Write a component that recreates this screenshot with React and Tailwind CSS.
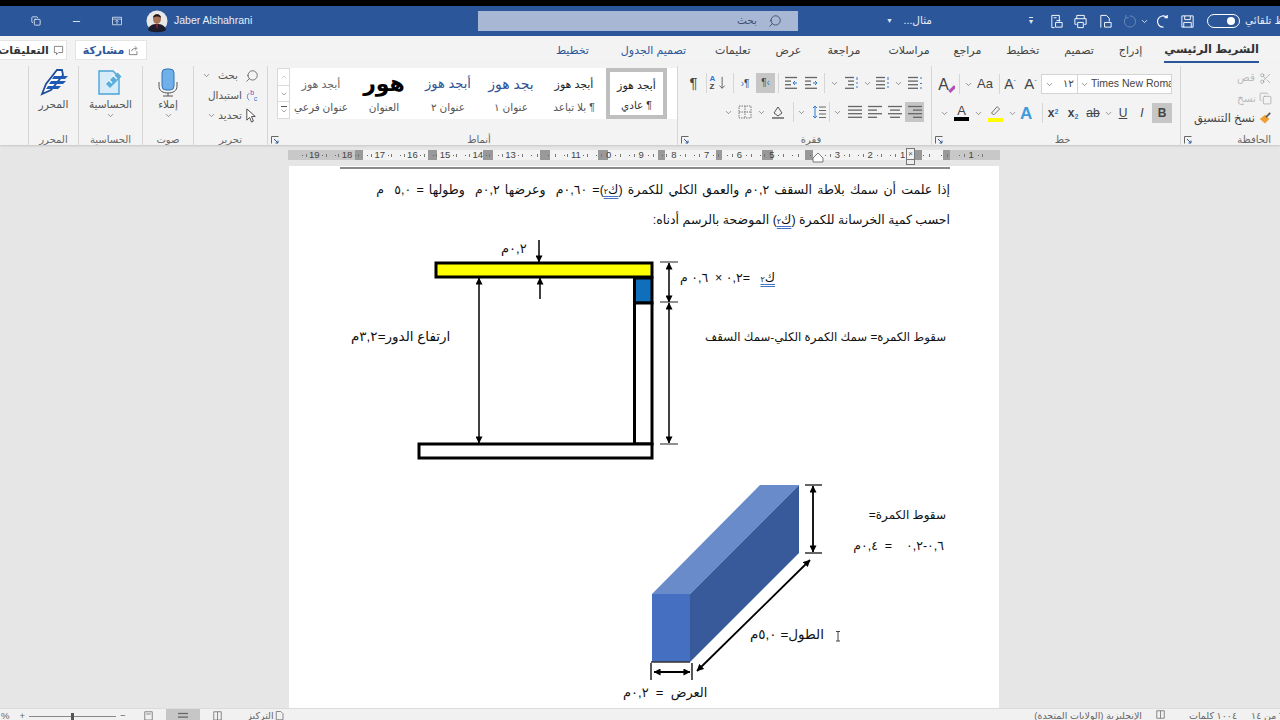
import { Search, Minus, ChevronDown, Copy, Scissors } from "lucide-react";

const Chev = ({ c = "" }) => <ChevronDown size={9} strokeWidth={1.6} className={`text-[#555] shrink-0 ${c}`} />;

const Sep = () => <div className="w-px h-5 bg-[#d6d6d6] shrink-0" />;

// small 16x16 drawn icon, children are the strokes
const Ic = ({ children, s = 16, c = "" }) => (
    <svg width={s} height={s} viewBox="0 0 16 16" fill="none" className={`shrink-0 ${c}`}>{children}</svg>
);

const Launcher = () => (
    <svg width="8" height="8" viewBox="0 0 8 8" fill="none" className="absolute left-[3px] bottom-[3px]">
        <path d="M0.5 7.5V0.5H7.5" stroke="#666" />
        <path d="M3 3L7 7M4.5 7H7V4.5" stroke="#2b579a" />
    </svg>
);

const Group = ({ w, label, launcher, right, children }) => (
    <div className={`relative h-full flex flex-col border-l border-[#d6d6d6] my-[2px] ${w}`}>
        <div className="flex-1 min-h-0">{children}</div>
        <div className={`h-[13px] mb-[1px] text-[10px] leading-[13px] text-[#666] ${right ? "text-right pr-[9px]" : "text-center"} ${launcher && !right ? "pl-[13px]" : ""}`}>{label}</div>
        {launcher && <Launcher />}
    </div>
);

const Lines = ({ rows, color = "#666", children }) => (
    <Ic>
        {rows.map((r, i) => <path key={i} d={`M${r[0]} ${2.5 + i * 3.6}H${r[1]}`} stroke={color} strokeWidth="1.3" />)}
        {children}
    </Ic>
);

const StyleCell = ({ w, preview, label, cls }) => (
    <div className={`h-full flex flex-col items-center shrink-0 ${w}`}>
        <div className={`h-[32px] flex items-center justify-center ${cls}`} dir="rtl">{preview}</div>
        <div className="text-[10.5px] leading-[14px] text-[#555]" dir="rtl">{label}</div>
    </div>
);

const Avatar = () => (
    <svg width="22" height="24" viewBox="0 0 22 24">
        <circle cx="11" cy="12" r="10.5" fill="#e8e8e8" />
        <path d="M2 21C3 16 7 15 11 15C15 15 19 16 20 21C17 24 5 24 2 21Z" fill="#1c1c2b" />
        <path d="M9.5 15L11 21L12.5 15Z" fill="#7a2230" />
        <ellipse cx="11" cy="10" rx="4" ry="5" fill="#a77357" />
        <path d="M7 9C7 4 15 4 15 9C13 7 9 7 7 9Z" fill="#20191a" />
    </svg>
);

const ruler = [19, 18, 17, 16, 15, 14, 13, "", 11, 0, 9, 8, 7, 6, 5, "", 3, 2, 1, "", 1];

const Ruler = () => (
    <div className="relative ml-[288px] mt-[5px] w-[712px] h-[10px] flex bg-[#c8c8c8]">
        <div className="w-[67px] shrink-0" />
        <div className="w-[8px] shrink-0 bg-[#999]" />
        <div className="w-[65px] shrink-0 bg-[#f3f3f3]" />
        <div className="w-[9px] shrink-0 bg-[#999]" />
        <div className="w-[46px] shrink-0 bg-[#f3f3f3]" />
        <div className="w-[10px] shrink-0 bg-[#999]" />
        <div className="w-[47px] shrink-0 bg-[#f3f3f3]" />
        <div className="w-[10px] shrink-0 bg-[#999]" />
        <div className="w-[48px] shrink-0 bg-[#f3f3f3]" />
        <div className="w-[10px] shrink-0 bg-[#999]" />
        <div className="w-[50px] shrink-0 bg-[#f3f3f3]" />
        <div className="w-[7px] shrink-0 bg-[#999]" />
        <div className="w-[51px] shrink-0 bg-[#f3f3f3]" />
        <div className="w-[6px] shrink-0 bg-[#999]" />
        <div className="w-[40px] shrink-0 bg-[#f3f3f3]" />
        <div className="w-[11px] shrink-0 bg-[#999]" />
        <div className="w-[32px] shrink-0 bg-[#f3f3f3]" />
        <div className="w-[8px] shrink-0 bg-[#999]" />
        <div className="w-[102px] shrink-0 bg-[#f3f3f3]" />
        <div className="w-[7px] shrink-0 bg-[#999]" />
        <div className="w-[21px] shrink-0 bg-[#f3f3f3]" />
        <div className="w-[7px] shrink-0 bg-[#999]" />
        <div className="absolute inset-0 pl-[10px] flex text-[9.5px] leading-[10px] text-[#444]">
            {ruler.map((n, i) => (
                <div key={i} className={`w-[32.7px] shrink-0 flex items-center justify-between px-[4px] ${i === 20 ? "ml-[3px]" : ""}`}>
                    <span className="w-px h-px bg-[#666]" />
                    <span className="w-px h-[3px] bg-[#777]" />
                    <span>{n}</span>
                    <span className="w-px h-px bg-[#666]" />
                    <span className="w-px h-[3px] bg-[#777]" />
                </div>
            ))}
        </div>
        <svg width="12" height="12" viewBox="0 0 12 12" className="absolute left-[524px] top-[2px]">
            <path d="M6 1L11 6V10H1V6Z" fill="#fff" stroke="#777" />
        </svg>
        <div className="absolute left-[618px] -top-[2px] w-[9px] h-[17px] border border-[#777] bg-[#f3f3f3]/60 flex flex-col">
            <span className="flex-1 text-center text-[8px] leading-[10px] text-[#555]">×</span>
            <span className="h-[5px] border-t border-[#777]" />
        </div>
    </div>
);

const Ku2 = () => <span className="underline decoration-double decoration-[#4472c4] underline-offset-2">ك<span className="text-[8px]">٢</span></span>;

const Lbl = ({ c, children }) => <span dir="rtl" className={`absolute whitespace-nowrap leading-[16px] text-[#111] ${c}`}>{children}</span>;

const Drawings = () => (
    <div className="relative w-[710px] h-[468px] shrink-0">
        <svg width="710" height="468" viewBox="289 240 710 468" className="absolute inset-0">
            <defs>
                <marker id="a" viewBox="0 0 8 8" refX="7.5" refY="4" markerWidth="7" markerHeight="7" orient="auto-start-reverse" markerUnits="userSpaceOnUse">
                    <path d="M0 0L8 4L0 8Z" fill="#000" />
                </marker>
            </defs>
            <rect x="436" y="264" width="216" height="14" fill="#ffff00" stroke="#000" strokeWidth="3" />
            <rect x="634.5" y="279" width="17.5" height="25" fill="#0f6fbd" stroke="#000" strokeWidth="3" />
            <rect x="634.5" y="304" width="17.5" height="141" fill="#fff" stroke="#000" strokeWidth="3" />
            <rect x="419" y="445" width="233" height="14" fill="#fff" stroke="#000" strokeWidth="3" />
            <g stroke="#000" strokeWidth="1.5" fill="none">
                <path d="M539 241V263" markerEnd="url(#a)" />
                <path d="M540 300V279" markerEnd="url(#a)" />
                <path d="M479 279V444" markerStart="url(#a)" markerEnd="url(#a)" />
                <path d="M669 264V303" markerStart="url(#a)" markerEnd="url(#a)" />
                <path d="M669 304V444" markerStart="url(#a)" markerEnd="url(#a)" />
            </g>
            <path d="M660 263H678M660 303H678M660 445H678" stroke="#222" strokeWidth="1.2" />

            <path d="M652 595L760 486H799L690 595Z" fill="#6a8bca" />
            <path d="M690 595L799 486V554L690 663Z" fill="#38599a" />
            <rect x="652" y="595" width="38" height="68" fill="#4570c2" />
            <path d="M805 486H822M805 554H822M651 663H690" stroke="#333" strokeWidth="1.3" />
            <path d="M651 664V681M692 664V681" stroke="#222" strokeWidth="1.5" />
            <g stroke="#000" strokeWidth="1.8" fill="none">
                <path d="M813 487V553" markerStart="url(#a)" markerEnd="url(#a)" />
                <path d="M697 672L810 561" markerStart="url(#a)" markerEnd="url(#a)" />
                <path d="M654 673H690" markerStart="url(#a)" markerEnd="url(#a)" />
            </g>
            <path d="M836 632.5H840M838 632.5V642M836 642H840" stroke="#444" strokeWidth="1" />
        </svg>
        <Lbl c="left-[212px] top-[2px] text-[13px]">٠,٢م</Lbl>
        <Lbl c="left-[391px] top-[31px] text-[12.5px]"><Ku2 />&nbsp;&nbsp; =٠,٢&nbsp;×&nbsp; ٠,٦&nbsp;م</Lbl>
        <Lbl c="right-[53px] top-[90px] text-[11.75px]">سقوط الكمرة= سمك الكمرة الكلي-سمك السقف</Lbl>
        <Lbl c="left-[62px] top-[90px] text-[13.5px]">ارتفاع الدور=٣,٢م</Lbl>
        <Lbl c="right-[53px] top-[268px] text-[12px]">سقوط الكمرة=</Lbl>
        <Lbl c="right-[55px] top-[299px] text-[12.5px]">٠,٦-٠,٢&nbsp;&nbsp;&nbsp; =&nbsp; ٠,٤م</Lbl>
        <Lbl c="left-[461px] top-[388px] text-[13.5px]">الطول= ٥,٠م</Lbl>
        <Lbl c="left-[334px] top-[446px] text-[13px]">العرض&nbsp; =&nbsp; ٠,٢م</Lbl>
    </div>
);

export default function App() {
    return (
        <div className="w-[1280px] h-[720px] overflow-hidden flex flex-col bg-[#e6e6e6] [font-family:'Liberation_Sans','DejaVu_Sans',sans-serif]">
            <div className="h-[6px] bg-black shrink-0" />

            <div className="h-[30px] shrink-0 bg-[#2b579a] flex items-center text-white overflow-hidden">
                <Copy size={10} className="ml-[31px] shrink-0 text-[#e8eef7]" />
                <Minus size={11} className="ml-[30px] shrink-0 text-[#e8eef7]" />
                <Ic s={12} c="ml-[29px]"><path d="M2 3H14V13H2ZM2 5.5H14M8 12V7M6 9L8 7L10 9" stroke="#e8eef7" /></Ic>
                <div className="ml-[23px] shrink-0"><Avatar /></div>
                <span className="ml-[6px] text-[10.5px] text-[#e8eef7] w-[74px] shrink-0 whitespace-nowrap">Jaber Alshahrani</span>
                <div className="ml-[230px] w-[320px] shrink-0 h-[20px] bg-[#a8b8d4] flex items-center justify-end pr-[16px] gap-[11px] text-[10.5px] text-[#3d4f70]">
                    <span>بحث</span>
                    <Search size={14} strokeWidth={1.3} className="text-[#2b3a55] -scale-x-100" />
                </div>
                <span className="ml-[88px] shrink-0 text-[#dfe6f2] text-[7px]">▼</span>
                <span className="ml-[11px] w-[28px] shrink-0 text-[10.5px] text-[#e8eef7] whitespace-nowrap" dir="rtl">مثال...</span>
                <span className="ml-[97px] shrink-0 text-[#dfe6f2] text-[8px] leading-[8px] border-t border-[#dfe6f2]">▾</span>
                <Ic s={15} c="ml-[16px]"><path d="M3 1.5H11V8M3 1.5V14.5H6M7 9H14V14H7Z" stroke="#fff" /><path d="M8 7H12M5 4H8" stroke="#fff" /></Ic>
                <Ic s={15} c="ml-[9px]"><path d="M4 5V1.5H12V5M2 5H14V11H12M2 5V11H4M5 9H11V14.5H5Z" stroke="#fff" /></Ic>
                <Ic s={15} c="ml-[10px]"><path d="M3 14.5V1.5H9L12 4.5V8M7 9H14V14H7Z" stroke="#fff" /></Ic>
                <Ic s={15} c="ml-[9px] opacity-30"><path d="M4 4A6 6 0 1 0 8 2M4 1V4H7" stroke="#fff" /></Ic>
                <ChevronDown size={9} className="ml-[3px] shrink-0 text-white" />
                <Ic s={15} c="ml-[7px]"><path d="M12 4A6 6 0 1 0 8 14M12 1V4H9" stroke="#fff" strokeWidth="1.2" /></Ic>
                <Ic s={15} c="ml-[9px]"><path d="M2 2H14V14H2ZM5 2V6H11V2M4 14V9H12V14" stroke="#fff" /></Ic>
                <div className="ml-[12px] w-[33px] h-[14px] rounded-full border border-white flex items-center justify-end pr-[4px] shrink-0">
                    <span className="w-[8px] h-[8px] rounded-full bg-white" />
                </div>
                <span className="ml-[5px] shrink-0 text-[10.5px] text-[#e8eef7] whitespace-nowrap" dir="rtl">حفظ تلقائي</span>
            </div>

            <div className="h-[28px] shrink-0 bg-[#f3f3f3] flex items-center text-[11px] text-[#444] relative">
                <div className="-ml-[5px] w-[72px] h-[20px] bg-white border border-[#e4e4e4] flex items-center justify-center gap-1 font-bold text-[#333] whitespace-nowrap">
                    <span dir="rtl">التعليقات</span>
                    <Ic s={11}><path d="M2 2H14V11H8L5 14V11H2Z" stroke="#555" /></Ic>
                </div>
                <div className="ml-[8px] w-[72px] h-[20px] bg-white border border-[#e4e4e4] flex items-center justify-center gap-1 font-bold text-[#2b579a]">
                    <span dir="rtl">مشاركة</span>
                    <Ic s={11}><path d="M2 6V14H13V9M5 9C6 6 8 5 12 5M10 2L13 5L10 8" stroke="#555" /></Ic>
                </div>
                <div className="flex-1 flex justify-end items-center pr-[21px] h-full">
                    <span className="text-[#2b579a]" dir="rtl">تخطيط</span>
                    <span className="ml-[32px] text-[#2b579a]" dir="rtl">تصميم الجدول</span>
                    <span className="ml-[29px]" dir="rtl">تعليمات</span>
                    <span className="ml-[25px]" dir="rtl">عرض</span>
                    <span className="ml-[26px]" dir="rtl">مراجعة</span>
                    <span className="ml-[28px]" dir="rtl">مراسلات</span>
                    <span className="ml-[24px]" dir="rtl">مراجع</span>
                    <span className="ml-[25px]" dir="rtl">تخطيط</span>
                    <span className="ml-[25px]" dir="rtl">تصميم</span>
                    <span className="ml-[25px]" dir="rtl">إدراج</span>
                    <div className="ml-[22px] relative h-full flex items-center font-bold text-[11.5px] text-[#333]" dir="rtl">
                        الشريط الرئيسي
                        <span className="absolute left-0 right-0 bottom-[1px] h-[2px] bg-[#2b579a]" />
                    </div>
                </div>
            </div>

            <div className="h-[81px] shrink-0 bg-[#f3f3f3] flex shadow-[0_1px_2px_rgba(0,0,0,0.15)] relative">
                <div className="w-[28px] shrink-0" />
                <Group w="w-[50px]" label="المحرر">
                    <div className="flex flex-col items-center pt-[2px]">
                        <svg width="30" height="28" viewBox="0 0 30 28" fill="none">
                            <path d="M3 26L7 16L18 2H23L24 7L12 22Z" fill="#fff" stroke="#1f4e9c" strokeWidth="1.8" />
                            <path d="M15 8H29L26 11H13ZM12 13H27L24 16H10ZM9 18H22L19 21H7Z" fill="#1f5bb5" />
                        </svg>
                        <span className="text-[10.5px] leading-[13px] text-[#555] mt-[2px]">المحرر</span>
                    </div>
                </Group>
                <Group w="w-[64px]" label="الحساسية">
                    <div className="flex flex-col items-center pt-[1px]">
                        <svg width="28" height="30" viewBox="0 0 28 30" fill="none">
                            <path d="M2 4H16L22 10V27H2Z" fill="#d7ecf8" stroke="#4ba3d6" strokeWidth="1.4" />
                            <path d="M9 17L21 5L25 9L13 21Z" fill="#5aaedc" />
                            <path d="M16 8L20 12M12 13L15 16M18 2L25 9" stroke="#fff" strokeWidth="1.2" />
                        </svg>
                        <span className="text-[10.5px] text-[#555] mt-[1px] leading-[13px]">الحساسية</span>
                        <Chev />
                    </div>
                </Group>
                <Group w="w-[51px]" label="صوت">
                    <div className="flex flex-col items-center pt-[2px]">
                        <svg width="22" height="29" viewBox="0 0 22 29" fill="none">
                            <rect x="5" y="1" width="12" height="21" rx="4" fill="#6fb0e8" stroke="#2e75b6" />
                            <path d="M2 14V18C2 23 6 25 11 25C16 25 20 23 20 18V14M11 25V28M6 28H16" stroke="#555" />
                        </svg>
                        <span className="text-[10.5px] text-[#555] mt-[1px] leading-[13px]">إملاء</span>
                        <Chev />
                    </div>
                </Group>
                <Group w="w-[74px]" label="تحرير" >
                    <div className="flex flex-col items-end pr-[8px] pt-[1px] text-[10.5px] text-[#555] gap-[3px]">
                        <div className="h-[17px] shrink-0 flex items-center gap-[7px]">
                            <Chev /><span>بحث</span>
                            <Search size={14} strokeWidth={1.2} className="-scale-x-100 text-[#444]" />
                        </div>
                        <div className="h-[17px] shrink-0 flex items-center gap-[3px]">
                            <span>استبدال</span>
                            <Ic s={14}>
                                <path d="M5 5C2 6 2 11 5 13" stroke="#2b7cd3" />
                                <text x="6" y="7" fontSize="8" fill="#8e3fb0">b</text>
                                <text x="10" y="14" fontSize="8" fill="#2b7cd3">c</text>
                            </Ic>
                        </div>
                        <div className="h-[17px] shrink-0 flex items-center gap-[2px]">
                            <Chev /><span>تحديد</span>
                            <Ic s={15}><path d="M3 1L12 9H8L10 14L8 15L6 10L3 13Z" fill="#fff" stroke="#444" /></Ic>
                        </div>
                    </div>
                </Group>
                <Group w="w-[410px]" label="أنماط" launcher>
                    <div className="ml-[9px] mt-[2px] w-[400px] h-[51px] bg-white flex">
                        <div className="w-[13px] shrink-0 flex flex-col border border-[#d9d9d9] text-[#777]">
                            <div className="flex-1 flex items-center justify-center border-b border-[#d9d9d9]"><ChevronDown size={8} className="rotate-180 text-[#bbb]" /></div>
                            <div className="flex-1 flex items-center justify-center border-b border-[#d9d9d9]"><ChevronDown size={8} /></div>
                            <div className="flex-1 flex flex-col items-center justify-center"><span className="w-[6px] h-px bg-[#555]" /><ChevronDown size={8} /></div>
                        </div>
                        <StyleCell w="w-[62px]" cls="text-[11px] text-[#666]" preview="أبجد هوز" label="عنوان فرعي" />
                        <StyleCell w="w-[64px]" cls="text-[22px] font-bold text-black leading-none" preview="هور" label="العنوان" />
                        <StyleCell w="w-[64px]" cls="text-[13px] text-[#2f5496]" preview="أبجد هوز" label="عنوان ٢" />
                        <StyleCell w="w-[62px]" cls="text-[14px] text-[#2f5496]" preview="بجد هوز" label="عنوان ١" />
                        <StyleCell w="w-[64px]" cls="text-[11px] text-[#222]" preview="أبجد هوز" label="¶ بلا تباعد" />
                        <div className="w-[61px] shrink-0 h-full border-[4px] border-[#bfbfbf] flex flex-col items-center">
                            <div className="h-[26px] flex items-center text-[11px] text-[#222]" dir="rtl">أبجد هوز</div>
                            <div className="text-[10.5px] leading-[14px] text-[#333]" dir="rtl">¶ عادي</div>
                        </div>
                    </div>
                </Group>
                <Group w="w-[254px]" label="فقرة" launcher>
                    <div className="pt-[7px] flex flex-col gap-[9px] pr-[7px]">
                        <div className="h-[20px] flex items-center justify-end">
                            <div className="w-[25px] text-center text-[15px] text-[#444]">¶</div>
                            <Sep />
                            <div className="w-[26px] flex justify-center items-center gap-[1px]">
                                <span className="flex flex-col text-[8px] leading-[8px] font-bold"><span className="text-[#2b7cd3]">A</span><span className="text-[#444]">Z</span></span>
                                <Ic s={14}><path d="M7 1V14M4 11L7 14L10 11" stroke="#555" /></Ic>
                            </div>
                            <Sep />
                            <div className="w-[22px] text-center text-[10px] text-[#444]"><span className="text-[#2b7cd3]">›</span>¶</div>
                            <div className="w-[19px] h-[20px] bg-[#c6c6c6] text-center text-[10px] leading-[20px] text-[#444]">¶<span className="text-[#2b7cd3]">‹</span></div>
                            <div className="w-[3px]" /><Sep />
                            <div className="w-[20px] flex justify-center ml-[2px]"><Lines rows={[[2, 14], [2, 8], [2, 8], [2, 14]]}><path d="M14 8H10M12 6L10 8L12 10" stroke="#2b7cd3" /></Lines></div>
                            <div className="w-[20px] flex justify-center"><Lines rows={[[2, 14], [2, 8], [2, 8], [2, 14]]}><path d="M10 8H14M12 6L14 8L12 10" stroke="#2b7cd3" /></Lines></div>
                            <div className="w-[3px]" /><Sep />
                            <div className="w-[18px] flex justify-center"><Chev /></div>
                            <div className="w-[18px] flex justify-center"><Lines rows={[[1, 10], [4, 10], [4, 10], [1, 10]]}><path d="M13 2V5M12 8H14M12 12H14" stroke="#2b7cd3" /></Lines></div>
                            <Chev c="mx-[2px]" />
                            <div className="w-[18px] flex justify-center"><Lines rows={[[1, 10], [1, 10], [1, 10], [1, 10]]}><path d="M13 2V5M12 8H14M12 12H14" stroke="#2b7cd3" /></Lines></div>
                            <Chev c="mx-[2px]" />
                            <div className="w-[19px] flex justify-center"><Lines rows={[[1, 11], [1, 11], [1, 11], [1, 11]]}><path d="M14 2.5V3.5M14 8V9M14 12.5V13.5" stroke="#2b7cd3" strokeWidth="2" /></Lines></div>
                        </div>
                        <div className="h-[20px] flex items-center justify-end">
                            <Chev c="mx-[3px]" />
                            <div className="w-[18px] flex justify-center"><Ic><path d="M2 2H14V14H2ZM8 2V14M2 8H14" stroke="#777" strokeDasharray="1.5 1" /></Ic></div>
                            <Chev c="mx-[3px]" />
                            <div className="w-[18px] flex justify-center"><Ic><path d="M4 9L8 3L12 9L8 12Z" stroke="#555" /><path d="M2 14H14" stroke="#888" strokeWidth="2" /></Ic></div>
                            <div className="w-[6px]" /><Sep />
                            <Chev c="mx-[3px]" />
                            <div className="w-[20px] flex justify-center"><Ic><path d="M4 2V14M2 4L4 2L6 4M2 12L4 14L6 12" stroke="#2b7cd3" /><path d="M8 3H15M8 6.5H15M8 10H15M8 13.5H15" stroke="#666" /></Ic></div>
                            <Sep />
                            <Chev c="mx-[3px]" />
                            <div className="w-[20px] flex justify-center"><Lines rows={[[1, 15], [1, 15], [1, 15], [1, 15]]} /></div>
                            <div className="w-[20px] flex justify-center"><Lines rows={[[1, 15], [1, 10], [1, 15], [1, 10]]} /></div>
                            <div className="w-[20px] flex justify-center"><Lines rows={[[1, 15], [3, 13], [1, 15], [3, 13]]} /></div>
                            <div className="w-[19px] h-[20px] bg-[#c6c6c6] flex items-center justify-center"><Lines rows={[[1, 15], [6, 15], [1, 15], [6, 15]]} /></div>
                        </div>
                    </div>
                </Group>
                <Group w="w-[249px]" label="خط" launcher>
                    <div className="pt-[8px] flex flex-col gap-[9px] pr-[8px]">
                        <div className="h-[20px] flex items-center justify-end text-[#444]">
                            <Ic s={18}><text x="1" y="13" fontSize="14" fill="#444" fontFamily="Liberation Sans">A</text><path d="M10 14L15 9L17 11L12 16Z" fill="#b24fb8" /></Ic>
                            <div className="w-[4px]" /><Sep />
                            <Chev c="mx-[4px]" />
                            <span className="w-[18px] text-[13px]">Aa</span>
                            <div className="w-[4px]" /><Sep />
                            <span className="w-[20px] text-center text-[14px]">A<sup className="text-[7px] text-[#2b7cd3]">ˇ</sup></span>
                            <span className="w-[21px] text-center text-[15px]">A<sup className="text-[7px] text-[#2b7cd3]">ˆ</sup></span>
                            <div className="w-[131px] h-[20px] bg-white border border-[#d4d4d4] flex items-center text-[10.5px]">
                                <div className="w-[37px] flex items-center justify-between px-[3px] border-r border-[#d4d4d4] h-full"><Chev /><span>١٢</span></div>
                                <Chev c="mx-[2px]" />
                                <span className="whitespace-nowrap overflow-hidden text-[#444]">Times New Roma</span>
                            </div>
                        </div>
                        <div className="h-[20px] flex items-center justify-end text-[#444]">
                            <Chev c="mx-[3px]" />
                            <div className="w-[19px] flex flex-col items-center leading-[12px] text-[13px]">A<span className="w-[15px] h-[4px] bg-black" /></div>
                            <Chev c="mx-[3px]" />
                            <div className="w-[19px] flex flex-col items-center"><Ic s={13}><path d="M3 10L10 2L13 5L6 12Z" stroke="#555" /></Ic><span className="w-[15px] h-[4px] bg-[#ffff00]" /></div>
                            <Chev c="mx-[3px]" />
                            <span className="w-[16px] text-[17px] font-bold text-[#3f9bdc] leading-none">A</span>
                            <div className="w-[6px]" /><Sep />
                            <span className="w-[20px] text-center text-[12px] font-bold">x<sup className="text-[7px] text-[#2b7cd3]">2</sup></span>
                            <span className="w-[20px] text-center text-[12px] font-bold">x<sub className="text-[7px] text-[#2b7cd3]">2</sub></span>
                            <span className="w-[20px] text-center text-[12px] line-through">ab</span>
                            <Chev c="mx-[1px]" />
                            <span className="w-[18px] text-center text-[12px] underline">U</span>
                            <span className="w-[20px] text-center text-[12px] italic">I</span>
                            <span className="w-[20px] h-[20px] bg-[#c6c6c6] text-center text-[12px] leading-[20px] font-bold">B</span>
                        </div>
                    </div>
                </Group>
                <Group w="w-[100px]" label="الحافظة" launcher right>
                    <div className="flex flex-col items-end pr-[8px] pt-[2px] text-[10.5px]">
                        <div className="h-[20px] shrink-0 flex items-center gap-[4px] text-[#bbb]"><span>قص</span><Scissors size={13} strokeWidth={1.2} className="text-[#999]" /></div>
                        <div className="h-[21px] shrink-0 flex items-center gap-[3px] text-[#bbb]"><span>نسخ</span><Copy size={13} strokeWidth={1.2} className="text-[#999]" /></div>
                        <div className="h-[20px] shrink-0 flex items-center gap-[3px] text-[#444]">
                            <span className="text-[11.5px]">نسخ التنسيق</span>
                            <Ic s={14}><path d="M2 8L8 3L13 8L8 13Z" fill="#f0a030" /><path d="M9 6L14 1" stroke="#555" strokeWidth="2" /></Ic>
                        </div>
                    </div>
                </Group>
            </div>

            <div className="h-[21px] shrink-0"><Ruler /></div>

            <div className="flex-1 min-h-0 ml-[289px] w-[710px] bg-white flex flex-col">
                <div className="ml-[51px] mt-[1px] w-[610px] h-[2px] shrink-0 bg-[#8a8a8a]" />
                <div dir="rtl" className="pr-[49px] pt-[7px] text-[12.5px] leading-[29px] text-[#111] shrink-0">
                    <p className="whitespace-nowrap [word-spacing:1.7px]">إذا علمت أن سمك بلاطة السقف ٠,٢م والعمق الكلي للكمرة (<Ku2 />)= ٠,٦٠م&nbsp; وعرضها ٠,٢م&nbsp; وطولها = ٥,٠&nbsp; م</p>
                    <p className="whitespace-nowrap">احسب كمية الخرسانة للكمرة (<Ku2 />) الموضحة بالرسم أدناه:</p>
                </div>
                <div className="mt-[3px] shrink-0"><Drawings /></div>
            </div>

            <div className="h-[12px] shrink-0 bg-[#f1f1f1] border-t border-[#dcdcdc] flex items-start text-[9.5px] leading-[14px] text-[#666] overflow-hidden">
                <span className="ml-[1px]">%</span>
                <span className="ml-[10px]">+</span>
                <div className="ml-[4px] mt-[7px] w-[87px] h-px bg-[#888] relative"><span className="absolute left-[42px] -top-[3px] w-[3px] h-[8px] bg-[#555]" /></div>
                <span className="ml-[4px]">−</span>
                <Ic s={12} c="ml-[18px] mt-[2px]"><path d="M1 1H11V12H1ZM3 4H9" stroke="#666" /></Ic>
                <div className="ml-[10px] w-[34px] h-full bg-[#c6c6c6] flex justify-center pt-[2px]"><Lines rows={[[3, 13], [3, 13], [3, 13], [3, 13]]} /></div>
                <Ic s={12} c="ml-[13px] mt-[2px]"><path d="M1 1H11V12H1ZM6 1V12" stroke="#666" /></Ic>
                <span className="ml-[25px] w-[24px] whitespace-nowrap" dir="rtl">التركيز</span>
                <Ic s={12} c="mt-[1px]"><path d="M3 2H9L12 5V13H3Z" stroke="#666" /></Ic>
                <div className="flex-1" />
                <span className="w-[106px] text-center whitespace-nowrap" dir="rtl">الإنجليزية (الولايات المتحدة)</span>
                <Ic s={12} c="ml-[14px] mt-[1px]"><path d="M1 1H11V11H1ZM6 1V11" stroke="#666" /></Ic>
                <span className="ml-[19px] w-[50px] whitespace-nowrap" dir="rtl">١٠٠٤ كلمات</span>
                <span className="ml-[15px] w-[32px] -mr-[4px] whitespace-nowrap" dir="rtl">٦ من ١٤</span>
            </div>
        </div>
    );
}
